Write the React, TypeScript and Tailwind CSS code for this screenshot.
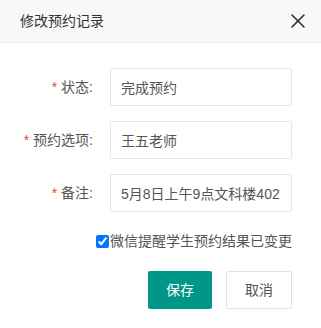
import { X } from "lucide-react";

const font = { fontFamily: '"Liberation Sans", "Noto Sans CJK SC", sans-serif' };

function Row({ label, value }: { label: string; value: string }) {
  return (
    <div className="flex items-center h-[38px] mb-[15px]">
      <label className="w-[110px] pr-[17px] text-right text-[14px] text-[#555] whitespace-nowrap">
        <span className="text-[#f0442a] mr-[4px]">*</span>
        {label}:
      </label>
      <input
        readOnly
        value={value}
        className="w-[182px] h-[38px] border border-[#e6e6e6] rounded-[2px] pl-[10px] text-[14px] text-[#555] outline-none bg-white"
      />
    </div>
  );
}

export default function App() {
  return (
    <div className="w-[321px] h-[328px] bg-white overflow-hidden" style={font}>
      {/* header */}
      <div className="h-[43px] bg-[#f8f8f8] border-b border-[#eeeeee] flex items-center justify-between pl-[20px] pr-[11px]">
        <span className="text-[14px] text-[#333]">修改预约记录</span>
        <X size={24} strokeWidth={1.6} className="text-[#2f2f3a]" />
      </div>

      <div className="pt-[25px]">
        <Row label="状态" value="完成预约" />
        <Row label="预约选项" value="王五老师" />
        <Row label="备注" value="5月8日上午9点文科楼402" />

        <div className="flex justify-end items-center pr-[29px] mt-[21px] h-[16px]">
          <input type="checkbox" defaultChecked className="w-[13px] h-[13px] m-0 mr-[1px] accent-[#0075ff]" />
          <span className="text-[14px] text-[#555] leading-none">微信提醒学生预约结果已变更</span>
        </div>

        <div className="flex justify-end gap-[14px] pr-[29px] mt-[22px]">
          <button className="w-[64px] h-[38px] rounded-[2px] bg-[#009688] text-white text-[14px]">保存</button>
          <button className="w-[66px] h-[38px] rounded-[2px] bg-white border border-[#e2e2e2] text-[#555] text-[14px]">取消</button>
        </div>
      </div>
    </div>
  );
}
